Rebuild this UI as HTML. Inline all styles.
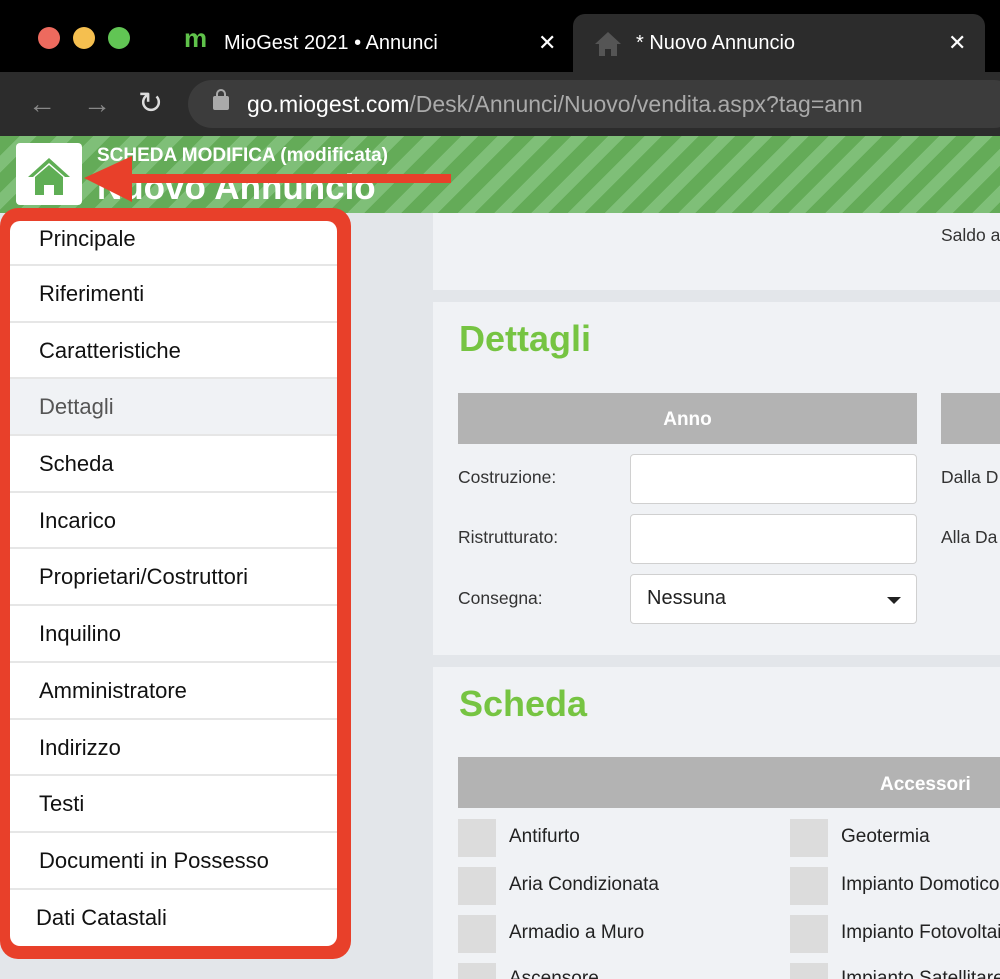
<!DOCTYPE html>
<html><head><meta charset="utf-8"><style>
*{margin:0;padding:0;box-sizing:border-box;white-space:nowrap}
html,body{width:1000px;height:979px;overflow:hidden}
body{background:#e3e6ea;font-family:"Liberation Sans",Arial,sans-serif;position:relative}
.abs{position:absolute}
.tabbar{left:0;top:0;width:1000px;height:72px;background:#000}
.dot{width:22px;height:22px;border-radius:50%;top:27px}
.tab2{left:573px;top:14px;width:412px;height:60px;background:#2c2c2c;border-radius:12px 12px 0 0}
.toolbar{left:0;top:72px;width:1000px;height:64px;background:#2c2c2c}
.url{left:188px;top:80px;width:830px;height:48px;background:#3c3c3c;border-radius:24px}
.banner{left:0;top:136px;width:1000px;height:77px;background:repeating-linear-gradient(135deg,#64ab58 0 14px,#7fbf78 14px 26px)}
.panel{background:#f0f2f5;left:433px;width:600px}
.lbl{font-size:17.5px;color:#333}
.inp{background:#fff;border:1px solid #d0d0d0;border-radius:4px;left:630px;width:287px;height:50px}
.row{height:56.7px;border-bottom:2px solid #e6e6e6;font-size:22px;color:#111;padding-left:29px;line-height:56px}
.cb{width:38px;height:38px;background:#dcdcdc}
.ct{font-size:19px;color:#222}
</style></head><body>
<div class="abs tabbar"></div>
<div class="abs dot" style="left:38px;background:#ed6a5e"></div>
<div class="abs dot" style="left:73px;background:#f5bf4f"></div>
<div class="abs dot" style="left:108px;background:#61c554"></div>
<div class="abs" style="left:184px;top:28px;color:#5fc24a;font-size:26px;font-weight:bold;line-height:20px">m</div>
<div class="abs" style="left:224px;top:32px;color:#fff;font-size:20px">MioGest 2021 • Annunci</div>
<div class="abs" style="left:538px;top:30px;color:#fff;font-size:22px">✕</div>
<div class="abs tab2"></div>
<svg class="abs" style="left:593px;top:30px" width="30" height="27" viewBox="0 0 30 27"><path d="M15 2 L2 14 H6 V26 H12 V19 H18 V26 H24 V14 H28Z" fill="#555"/></svg>
<div class="abs" style="left:636px;top:32px;color:#fff;font-size:20px">* Nuovo Annuncio</div>
<div class="abs" style="left:948px;top:30px;color:#fff;font-size:22px">✕</div>
<div class="abs toolbar"></div>
<div class="abs" style="left:28px;top:88px;color:#888;font-size:28px">←</div>
<div class="abs" style="left:83px;top:88px;color:#888;font-size:28px">→</div>
<div class="abs" style="left:138px;top:86px;color:#ddd;font-size:30px">↻</div>
<div class="abs url"></div>
<div class="abs" style="left:213px;top:96px;width:16px;height:14px;background:#aaa;border-radius:2px"></div>
<div class="abs" style="left:216px;top:89px;width:10px;height:10px;border:2px solid #aaa;border-radius:5px 5px 0 0"></div>
<div class="abs" style="left:247px;top:91px;font-size:23px;color:#fff">go.miogest.com<span style="color:#aaa">/Desk/Annunci/Nuovo/vendita.aspx?tag=ann</span></div>
<div class="abs banner"></div>
<div class="abs" style="left:16px;top:143px;width:66px;height:62px;background:#fff;border-radius:4px"></div>
<svg class="abs" style="left:27px;top:155px" width="44" height="42" viewBox="0 0 44 42"><path d="M22 3 L1 22 H6 L22 8 L38 22 H43Z" fill="#5fae55"/><path d="M8 22 L22 10 L36 22 V40 H27 V30 H17 V40 H8Z" fill="#5fae55"/></svg>
<div class="abs" style="left:97px;top:145px;color:#fff;font-size:19px;font-weight:bold">SCHEDA MODIFICA (modificata)</div>
<div class="abs" style="left:97px;top:168px;color:#fff;font-size:35px;font-weight:bold">Nuovo Annuncio</div>
<div class="abs" style="left:125px;top:174px;width:326px;height:9px;background:#e8402a"></div>
<svg class="abs" style="left:84px;top:156px" width="50" height="46"><path d="M0 22 L48 0 V46Z" fill="#e8402a"/></svg>

<div class="abs panel" style="top:213px;height:77px"></div>
<div class="abs lbl" style="left:941px;top:225px">Saldo a</div>
<div class="abs panel" style="top:302px;height:353px"></div>
<div class="abs" style="left:459px;top:318px;color:#76c442;font-size:36px;font-weight:bold">Dettagli</div>
<div class="abs" style="left:458px;top:393px;width:459px;height:51px;background:#b3b3b3;color:#fff;font-weight:bold;font-size:19px;text-align:center;line-height:53px">Anno</div>
<div class="abs" style="left:941px;top:393px;width:100px;height:51px;background:#b3b3b3"></div>
<div class="abs lbl" style="left:458px;top:467px">Costruzione:</div>
<div class="abs lbl" style="left:458px;top:527px">Ristrutturato:</div>
<div class="abs lbl" style="left:458px;top:588px">Consegna:</div>
<div class="abs lbl" style="left:941px;top:467px">Dalla D</div>
<div class="abs lbl" style="left:941px;top:527px">Alla Da</div>
<div class="abs inp" style="top:454px"></div>
<div class="abs inp" style="top:514px"></div>
<div class="abs inp" style="top:574px"></div>
<div class="abs" style="left:647px;top:587px;font-size:20px;color:#222">Nessuna</div>
<div class="abs" style="left:887px;top:597px;border-left:7px solid transparent;border-right:7px solid transparent;border-top:7px solid #222"></div>
<div class="abs panel" style="top:667px;height:312px"></div>
<div class="abs" style="left:459px;top:683px;color:#76c442;font-size:36px;font-weight:bold">Scheda</div>
<div class="abs" style="left:458px;top:757px;width:560px;height:51px;background:#b3b3b3;color:#fff;font-weight:bold;font-size:19px;line-height:55px;padding-left:422px">Accessori</div>
<div class="abs cb" style="left:458px;top:819px"></div><div class="abs ct" style="left:509px;top:826px">Antifurto</div>
<div class="abs cb" style="left:458px;top:867px"></div><div class="abs ct" style="left:509px;top:874px">Aria Condizionata</div>
<div class="abs cb" style="left:458px;top:915px"></div><div class="abs ct" style="left:509px;top:922px">Armadio a Muro</div>
<div class="abs cb" style="left:458px;top:963px"></div><div class="abs ct" style="left:509px;top:968px">Ascensore</div>
<div class="abs cb" style="left:790px;top:819px"></div><div class="abs ct" style="left:841px;top:826px">Geotermia</div>
<div class="abs cb" style="left:790px;top:867px"></div><div class="abs ct" style="left:841px;top:874px">Impianto Domotico</div>
<div class="abs cb" style="left:790px;top:915px"></div><div class="abs ct" style="left:841px;top:922px">Impianto Fotovoltaico</div>
<div class="abs cb" style="left:790px;top:963px"></div><div class="abs ct" style="left:841px;top:968px">Impianto Satellitare</div>

<div class="abs" style="left:0;top:208px;width:351px;height:751px;background:#e8402a;border-radius:18px"></div>
<div class="abs" style="left:10px;top:221px;width:327px;height:725px;background:#fff;border-radius:10px;overflow:hidden">
<div class="row" style="height:45px;line-height:36px">Principale</div>
<div class="row">Riferimenti</div>
<div class="row">Caratteristiche</div>
<div class="row" style="background:#f0f2f5;color:#555">Dettagli</div>
<div class="row">Scheda</div>
<div class="row">Incarico</div>
<div class="row">Proprietari/Costruttori</div>
<div class="row">Inquilino</div>
<div class="row">Amministratore</div>
<div class="row">Indirizzo</div>
<div class="row">Testi</div>
<div class="row">Documenti in Possesso</div>
<div class="row" style="border:0;padding-left:26px">Dati Catastali</div>
</div>
</body></html>
